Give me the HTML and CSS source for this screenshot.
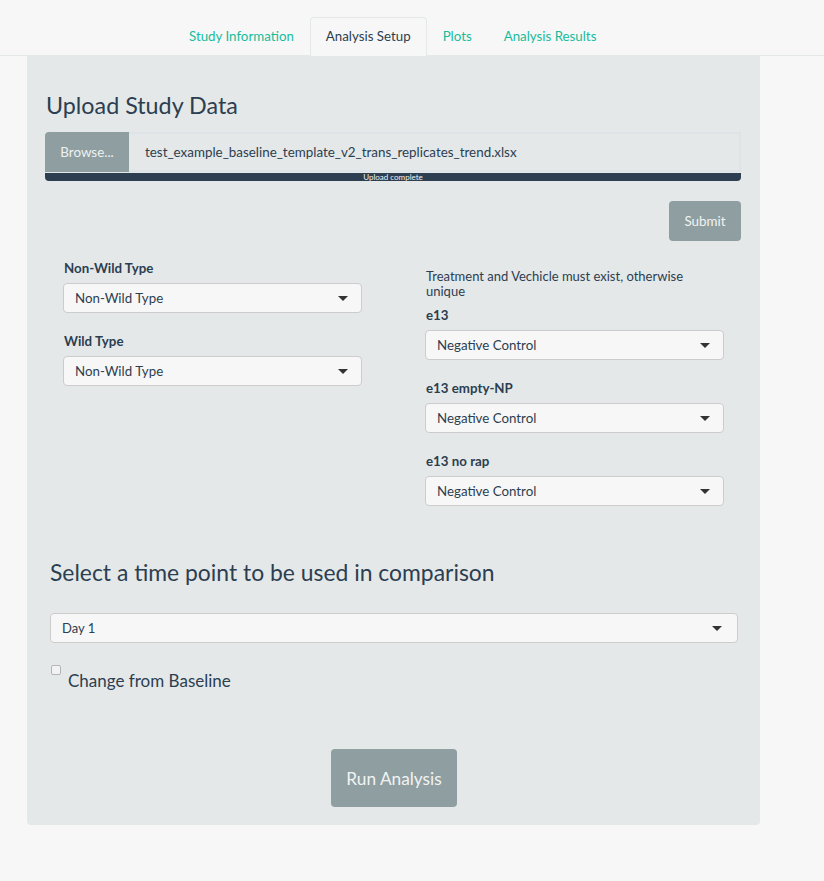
FILE: index.html
```html
<!DOCTYPE html>
<html>
<head>
<meta charset="utf-8">
<link rel="stylesheet" href="styles.css">
</head>
<body>
<nav class="tabs-bar">
  <ul class="tabs">
    <li><a class="tab">Study Information</a></li>
    <li><a class="tab active">Analysis Setup</a></li>
    <li><a class="tab">Plots</a></li>
    <li><a class="tab">Analysis Results</a></li>
  </ul>
</nav>
<main class="well">
  <h2 class="section-title">Upload Study Data</h2>
  <div class="file-input">
    <span class="browse">Browse...</span>
    <span class="file-name">test_example_baseline_template_v2_trans_replicates_trend.xlsx</span>
  </div>
  <div class="progress"><span>Upload complete</span></div>
  <div class="submit-row"><button class="btn btn-small">Submit</button></div>
  <div class="columns">
    <div class="col">
      <div class="field">
        <label class="field-label">Non-Wild Type</label>
        <div class="select"><span>Non-Wild Type</span><i class="caret"></i></div>
      </div>
      <div class="field">
        <label class="field-label">Wild Type</label>
        <div class="select"><span>Non-Wild Type</span><i class="caret"></i></div>
      </div>
    </div>
    <div class="col">
      <p class="note">Treatment and Vechicle must exist, otherwise unique</p>
      <div class="field">
        <label class="field-label">e13</label>
        <div class="select"><span>Negative Control</span><i class="caret"></i></div>
      </div>
      <div class="field">
        <label class="field-label">e13 empty-NP</label>
        <div class="select"><span>Negative Control</span><i class="caret"></i></div>
      </div>
      <div class="field">
        <label class="field-label">e13 no rap</label>
        <div class="select"><span>Negative Control</span><i class="caret"></i></div>
      </div>
    </div>
  </div>
  <div class="timepoint">
    <h3 class="tp-title">Select a time point to be used in comparison</h3>
    <div class="select select-wide"><span>Day 1</span><i class="caret"></i></div>
    <label class="check"><span class="box"></span><span class="check-text">Change from Baseline</span></label>
  </div>
  <div class="run-row"><button class="btn btn-large">Run Analysis</button></div>
</main>
</body>
</html>
```
FILE: styles.css
```css
* { box-sizing: border-box; }
html, body { margin: 0; padding: 0; }
body {
  background: #f7f7f7;
  font-family: Lato, "Open Sans", sans-serif;
  color: #2c3e50;
  font-size: 13px;
  width: 824px;
  height: 881px;
  overflow: hidden;
}
.tabs-bar {
  padding-top: 17px;
  border-bottom: 1px solid #e4e8e9;
}
.tabs {
  list-style: none;
  margin: 0;
  padding: 0;
  display: flex;
  margin-left: 173px;
}
.tabs li { margin-bottom: -1px; }
.tab {
  display: block;
  white-space: nowrap;
  padding: 0 15px;
  height: 39px;
  line-height: 37px;
  font-size: 13.3px;
  color: #18bc9c;
  border: 1px solid transparent;
  border-bottom: none;
  border-radius: 4px 4px 0 0;
}
.tab.active {
  color: #2c3e50;
  background: #f7f7f7;
  border-color: #e4e8e9;
}
.well {
  display: block;
  margin-left: 27px;
  width: 733px;
  height: 769px;
  background: #e4e8e9;
  border-radius: 0 0 4px 4px;
  padding: 36px 19px 0 18px;
}
.section-title {
  margin: 0 0 13px 1px;
  font-weight: 400;
  font-size: 23.3px;
  line-height: 27px;
  color: #2c3e50;
}
.file-input {
  display: flex;
  height: 40px;
}
.browse {
  width: 84px;
  background: #8f9ea0;
  color: #eef1f1;
  font-size: 13.4px;
  line-height: 40px;
  text-align: center;
  border-radius: 4px 0 0 0;
}
.file-name {
  flex: 1;
  border: 2px solid #dde3e6;
  border-left: none;
  padding-left: 16px;
  line-height: 36px;
  font-size: 13.4px;
  color: #2c3e50;
}
.progress {
  margin-top: 1px;
  height: 8px;
  background: #2c3e50;
  border-radius: 0 0 4px 4px;
  text-align: center;
  font-size: 8px;
  line-height: 9px;
  color: #f2f2f2;
}
.submit-row {
  display: flex;
  justify-content: flex-end;
  margin-top: 20px;
}
.btn {
  border: none;
  background: #8f9ea0;
  color: #f1f3f3;
  font-family: Lato, sans-serif;
  border-radius: 4px;
  padding: 0;
}
.btn-small {
  width: 72px;
  height: 40px;
  font-size: 13.4px;
}
.columns {
  display: grid;
  grid-template-columns: 299px 299px;
  column-gap: 63px;
  margin-top: 19px;
  padding-left: 18px;
}
.field { margin-bottom: 20px; }
.col .field:last-child { margin-bottom: 0; }
.field-label {
  display: block;
  font-weight: 700;
  font-size: 13.3px;
  line-height: 16px;
  margin: 0 0 7px 1px;
}
.note {
  margin: 9px 0 8px 1px;
  font-size: 13px;
  line-height: 15px;
  width: 280px;
}
.select {
  display: flex;
  align-items: center;
  justify-content: space-between;
  height: 30px;
  background: #f7f7f7;
  border: 1px solid #cccccc;
  border-radius: 4px;
  padding: 0 13px 0 11px;
  font-size: 13.3px;
  color: #2c3e50;
}
.caret {
  width: 0;
  height: 0;
  border-left: 5px solid transparent;
  border-right: 5px solid transparent;
  border-top: 5px solid #333;
}
.timepoint {
  padding: 0 3px 0 5px;
  margin-top: 53px;
}
.tp-title {
  margin: 0 0 27px 0;
  font-weight: 400;
  font-size: 22.9px;
  line-height: 27px;
}
.select-wide {
  font-size: 13px;
  padding-right: 15px;
}
.check {
  display: flex;
  align-items: flex-start;
  margin-top: 21px;
}
.box {
  width: 10px;
  height: 10px;
  border: 1px solid #b5b5b5;
  border-radius: 2px;
  background: #f2f2f2;
  margin: 1px 7px 0 1px;
}
.check-text {
  font-size: 17px;
  line-height: 20px;
  margin-top: 7px;
}
.run-row {
  display: flex;
  margin-top: 58px;
  padding-left: 286px;
}
.btn-large {
  width: 126px;
  height: 58px;
  font-size: 17.3px;
}
```
